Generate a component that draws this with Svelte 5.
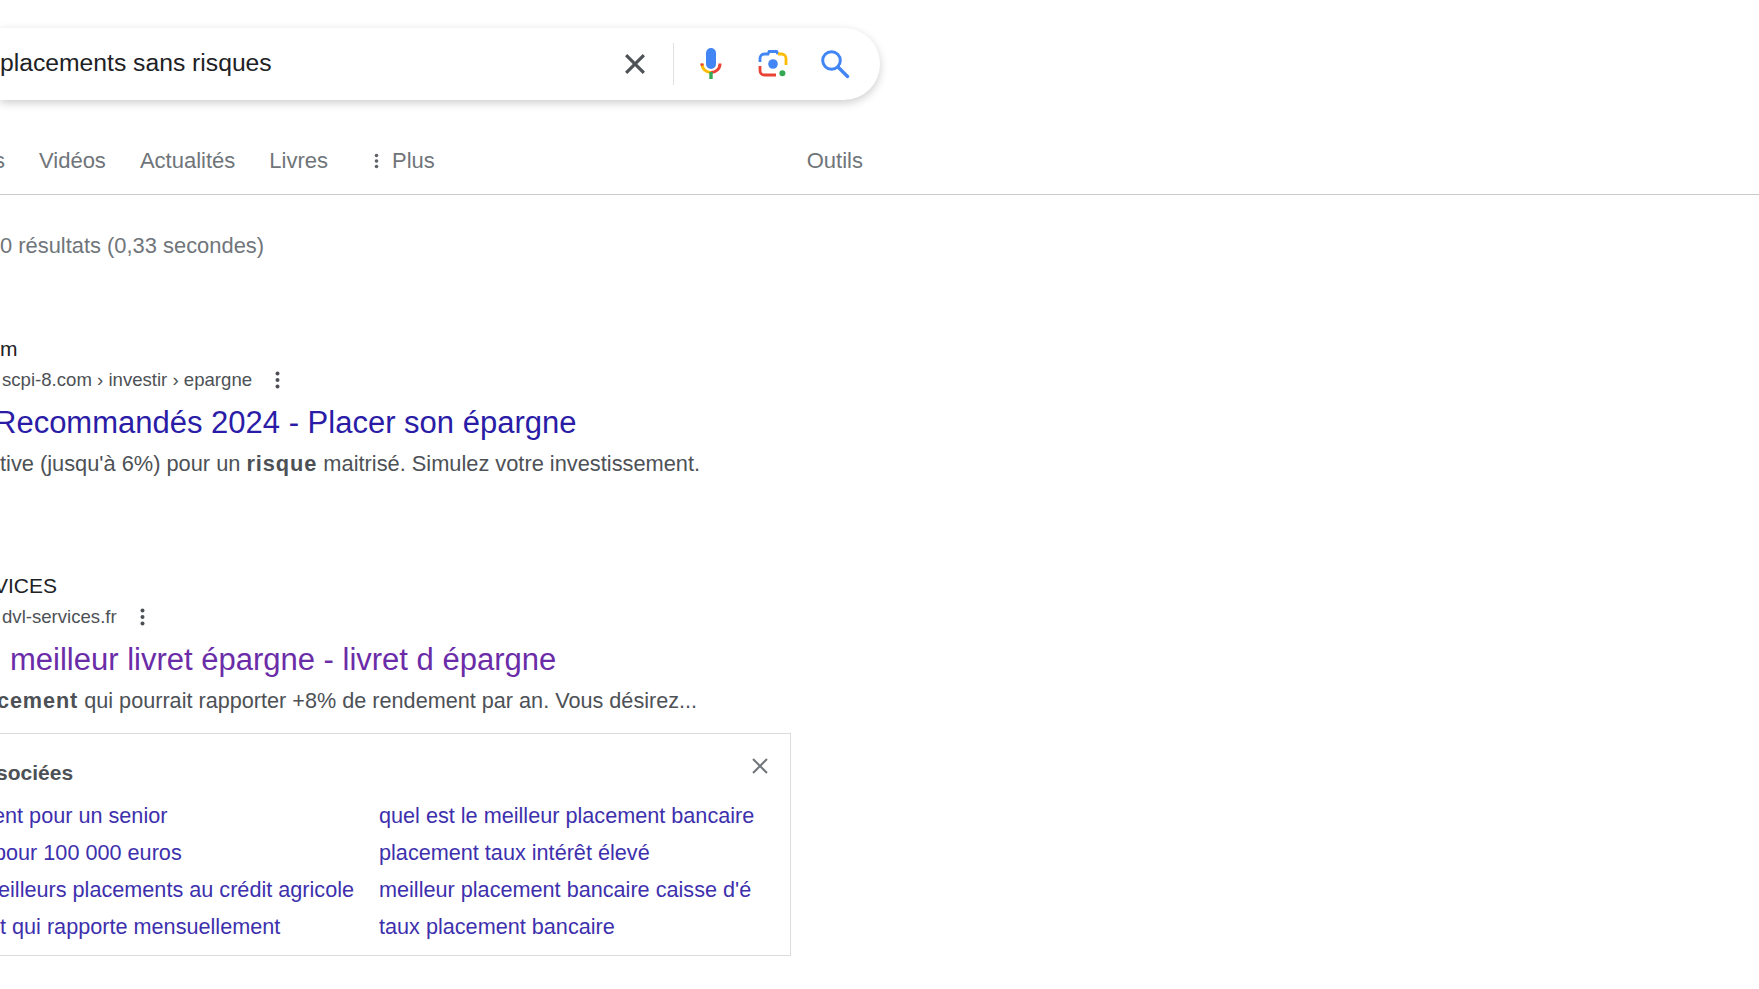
<script lang="ts">
  // Results page, cropped on its left edge: only the visible text is kept
  const tabs = ['Vidéos', 'Actualités', 'Livres'];
  const related = [
    { text: 'ent pour un senior', cut: 7 },
    { text: 'quel est le meilleur placement bancaire', cut: 0 },
    { text: 'pour 100 000 euros', cut: 6 },
    { text: 'placement taux intérêt élevé', cut: 0 },
    { text: 'eilleurs placements au crédit agricole', cut: 2 },
    { text: "meilleur placement bancaire caisse d'é", cut: 0 },
    { text: 't qui rapporte mensuellement', cut: 0 },
    { text: 'taux placement bancaire', cut: 0 }
  ];
</script>

<div class="page">
  <div class="search">
    <span class="query">placements sans risques</span>
    <div class="icons">
      <svg class="ic-x" width="32" height="32" viewBox="0 0 24 24" aria-hidden="true">
        <path d="M19.5 6.2 17.8 4.5 12 10.3 6.2 4.5 4.5 6.2 10.3 12l-5.8 5.8 1.7 1.7 5.8-5.8 5.8 5.8 1.7-1.7-5.8-5.8z" fill="#4f5256" />
      </svg>
      <span class="divider"></span>
      <svg class="ic-mic" width="28" height="34" viewBox="0 0 28 34" aria-hidden="true">
        <rect x="9" y="1" width="10" height="21" rx="5" fill="#4285f4" />
        <path d="M5 16.5c0 5.4 4 9 9 9" fill="none" stroke="#fbbc04" stroke-width="3" />
        <path d="M5 16.5c0 .8.1 1.5.3 2.2" fill="none" stroke="#ea4335" stroke-width="3" />
        <path d="M23 16.5c0 5.4-4 9-9 9" fill="none" stroke="#ea4335" stroke-width="3" />
        <path d="M14 25v7" stroke="#34a853" stroke-width="3.4" />
      </svg>
      <svg class="ic-lens" width="30" height="30" viewBox="0 0 30 30" aria-hidden="true">
        <circle cx="15" cy="15" r="4.8" fill="#4285f4" />
        <circle cx="24.4" cy="24.2" r="3" fill="#34a853" />
        <path d="M2 13V9.5C2 7 4 5 6.5 5H10l1.2-2.5h7.4L20 5" fill="none" stroke="#4285f4" stroke-width="2.8" />
        <path d="M20 5h3.5C26 5 28 7 28 9.5V16" fill="none" stroke="#fbbc04" stroke-width="2.8" />
        <path d="M2 17v4.5C2 24 4 26 6.5 26H18" fill="none" stroke="#ea4335" stroke-width="2.8" />
      </svg>
      <svg class="ic-search" width="30" height="30" viewBox="0 0 30 30" aria-hidden="true">
        <circle cx="11.5" cy="11.5" r="8.8" fill="none" stroke="#4285f4" stroke-width="3" />
        <path d="m18 18 9.5 9.5" stroke="#4285f4" stroke-width="3.4" stroke-linecap="round" />
      </svg>
    </div>
  </div>

  <nav class="tabs">
    <div class="tabs-inner">
      <span class="tab cut">s</span>
      {#each tabs as t}
        <span class="tab">{t}</span>
      {/each}
      <span class="more">
        <svg width="5" height="16" viewBox="0 0 5 16" aria-hidden="true">
          <circle cx="2.5" cy="2.5" r="1.8" fill="#5f6368" />
          <circle cx="2.5" cy="8" r="1.8" fill="#5f6368" />
          <circle cx="2.5" cy="13.5" r="1.8" fill="#5f6368" />
        </svg>
        Plus
      </span>
      <span class="tools">Outils</span>
    </div>
  </nav>

  <p class="count">0 résultats (0,33 secondes)</p>

  <article class="result first">
    <div class="site">m</div>
    <div class="url">
      <span>scpi-8.com › investir › epargne</span>
      <svg class="dots" width="5" height="18" viewBox="0 0 5 18" aria-hidden="true">
        <circle cx="2.5" cy="2.5" r="2" fill="#4d5156" />
        <circle cx="2.5" cy="9" r="2" fill="#4d5156" />
        <circle cx="2.5" cy="15.5" r="2" fill="#4d5156" />
      </svg>
    </div>
    <h3 class="title">Recommandés 2024 - Placer son épargne</h3>
    <p class="snippet">tive (jusqu'à 6%) pour un <b>risque</b> maitrisé. Simulez votre investissement.</p>
  </article>

  <article class="result second">
    <div class="site">VICES</div>
    <div class="url">
      <span>dvl-services.fr</span>
      <svg class="dots" width="5" height="18" viewBox="0 0 5 18" aria-hidden="true">
        <circle cx="2.5" cy="2.5" r="2" fill="#4d5156" />
        <circle cx="2.5" cy="9" r="2" fill="#4d5156" />
        <circle cx="2.5" cy="15.5" r="2" fill="#4d5156" />
      </svg>
    </div>
    <h3 class="title visited">meilleur livret épargne - livret d épargne</h3>
    <p class="snippet"><b>cement</b> qui pourrait rapporter +8% de rendement par an. Vous désirez...</p>
  </article>

  <section class="box">
    <header class="box-head">
      <span class="box-title">sociées</span>
      <svg class="close" width="18" height="18" viewBox="0 0 18 18" aria-hidden="true">
        <path d="M2 2l14 14M16 2 2 16" stroke="#70757a" stroke-width="2" />
      </svg>
    </header>
    <div class="grid">
      {#each related as r}
        <span class="rel" style="margin-left: {-r.cut}px">{r.text}</span>
      {/each}
    </div>
  </section>
</div>

<style>
  :global(body) {
    margin: 0;
    background: #fff;
  }
  .page {
    width: 1759px;
    height: 989px;
    overflow: hidden;
    box-sizing: border-box;
    padding-top: 28px;
    font-family: "Liberation Sans", Arial, sans-serif;
    color: #4d5156;
  }
  p,
  h3 {
    margin: 0;
  }

  .search {
    width: 880px;
    height: 72px;
    box-sizing: border-box;
    display: flex;
    align-items: center;
    justify-content: space-between;
    border-radius: 0 36px 36px 0;
    box-shadow: 0 3px 8px rgba(32, 33, 36, 0.22);
  }
  .query {
    font-size: 24.7px;
    color: #202124;
    padding-bottom: 2px;
  }
  .icons {
    display: flex;
    align-items: center;
    margin-right: 30px;
  }
  .ic-x {
    margin-right: 22px;
  }
  .divider {
    width: 1px;
    height: 42px;
    background: #dfe1e5;
    margin-right: 23px;
  }
  .ic-mic {
    margin-right: 33px;
  }
  .ic-lens {
    margin-right: 32px;
  }

  .tabs {
    height: 95px;
    box-sizing: border-box;
    border-bottom: 1px solid #c9cbcf;
  }
  .tabs-inner {
    width: 863px;
    display: flex;
    align-items: center;
    padding-top: 48px;
    font-size: 22px;
    line-height: 26px;
    color: #70757a;
  }
  .tab {
    margin-right: 34px;
  }
  .cut {
    margin-left: -6px;
    margin-right: 34px;
  }
  .more {
    display: flex;
    align-items: center;
    gap: 13px;
    margin-left: 12px;
  }
  .tools {
    margin-left: auto;
  }

  .count {
    margin-top: 38px;
    font-size: 21.9px;
    line-height: 26px;
    color: #70757a;
  }

  .first {
    margin-top: 77px;
  }
  .second {
    margin-top: 96px;
  }
  .site {
    font-size: 21px;
    line-height: 26px;
    color: #202124;
  }
  .second .site {
    margin-left: -6px;
  }
  .url {
    display: flex;
    align-items: center;
    gap: 23px;
    margin-top: 6px;
    padding-left: 2px;
    font-size: 18.6px;
    line-height: 24px;
    color: #4d5156;
  }
  .title {
    margin-top: 12px;
    margin-left: -6px;
    font-size: 31px;
    line-height: 38px;
    font-weight: 400;
    white-space: nowrap;
    color: #2a1ca6;
  }
  .visited {
    color: #6b2ca8;
    margin-left: 10px;
  }
  .snippet {
    margin-top: 9px;
    font-size: 21.8px;
    line-height: 26px;
    white-space: nowrap;
  }
  .snippet b {
    letter-spacing: 0.9px;
  }
  .second .snippet {
    margin-left: -3px;
    font-size: 21.65px;
  }

  .box {
    width: 791px;
    height: 223px;
    box-sizing: border-box;
    margin-top: 19px;
    border: 1px solid #dadce0;
    border-left: none;
    display: flex;
    flex-direction: column;
  }
  .box-head {
    display: flex;
    justify-content: space-between;
    align-items: flex-start;
    padding-top: 23px;
    padding-right: 21px;
  }
  .box-title {
    margin-top: 3px;
    margin-left: -4px;
    font-size: 21px;
    line-height: 26px;
    font-weight: 700;
  }
  .grid {
    display: grid;
    grid-template-columns: 379px 1fr;
    margin-top: 17px;
    row-gap: 11px;
  }
  .rel {
    font-size: 21.65px;
    line-height: 26px;
    color: #3d30ad;
    white-space: nowrap;
  }
</style>
